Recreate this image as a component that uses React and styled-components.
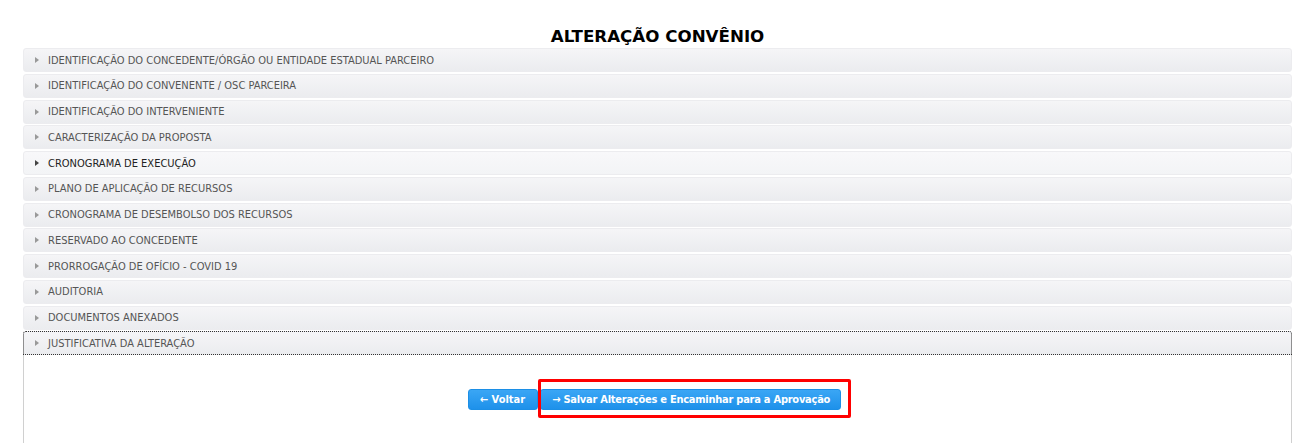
import React from 'react';
import styled, { createGlobalStyle } from 'styled-components';

const GlobalStyle = createGlobalStyle`
  html, body {
    margin: 0;
    padding: 0;
    background: #fff;
  }
  body {
    font-family: "DejaVu Sans Condensed", "DejaVu Sans", sans-serif;
  }
`;

const Page = styled.div`
  padding: 26px 16px 0 23px;
  width: 1269px;
`;

const Title = styled.h1`
  margin: 0 0 2px;
  text-align: center;
  font-family: "DejaVu Sans", sans-serif;
  font-size: 16.7px;
  font-weight: bold;
  line-height: 20px;
  color: #000;
`;

const Accordion = styled.div`
  display: flex;
  flex-direction: column;
  gap: 1.75px;
`;

const Header = styled.div`
  display: flex;
  align-items: center;
  height: 24px;
  box-sizing: border-box;
  padding-left: 11px;
  border-radius: 3px;
  border: 1px solid #ececef;
  background: linear-gradient(#f5f5f7, #ebecef);
  font-size: 11px;
  color: ${p => (p.$hover ? '#222' : '#555')};
  outline: ${p => (p.$focus ? '1px dotted #333' : 'none')};
  outline-offset: -1px;
  border-bottom-left-radius: ${p => (p.$open ? 0 : '3px')};
  border-bottom-right-radius: ${p => (p.$open ? 0 : '3px')};
  ${p => p.$hover && 'background: linear-gradient(#f8f8fa, #f3f4f6);'}
`;

const Arrow = styled.span`
  width: 0;
  height: 0;
  margin-right: 9px;
  border-top: 3px solid transparent;
  border-bottom: 3px solid transparent;
  border-left: 4px solid ${p => (p.$dark ? '#444' : '#999')};
`;

const Panel = styled.div`
  height: 90px;
  border-left: 1px solid #d0d0d0;
  border-right: 1px solid #d0d0d0;
  display: flex;
  justify-content: center;
  align-items: flex-start;
  padding: 34px 6px 0 0;
  box-sizing: border-box;
  margin-top: -1.75px;
  gap: 2px;
`;

const Button = styled.button`
  position: relative;
  height: 21px;
  padding: 0 ${p => (p.$wide ? '10px' : '12px')} 0 11px;
  border: 1px solid #1c8fe6;
  border-radius: 3px;
  background: linear-gradient(#3aa6f5, #1e91ea);
  color: #fff;
  font-family: "DejaVu Sans Condensed", "DejaVu Sans", sans-serif;
  font-size: 11px;
  font-weight: bold;
  letter-spacing: ${p => (p.$wide ? '-0.25px' : '0')};
  display: flex;
  align-items: center;
  gap: ${p => (p.$wide ? '5px' : '7px')};
  cursor: pointer;
`;

const Mark = styled.span`
  position: absolute;
  left: -3px;
  top: -11px;
  right: -11px;
  bottom: -9px;
  border: 3px solid #f00;
  border-radius: 2px;
  pointer-events: none;
`;

const sections = [
  'IDENTIFICAÇÃO DO CONCEDENTE/ÓRGÃO OU ENTIDADE ESTADUAL PARCEIRO',
  'IDENTIFICAÇÃO DO CONVENENTE / OSC PARCEIRA',
  'IDENTIFICAÇÃO DO INTERVENIENTE',
  'CARACTERIZAÇÃO DA PROPOSTA',
  'CRONOGRAMA DE EXECUÇÃO',
  'PLANO DE APLICAÇÃO DE RECURSOS',
  'CRONOGRAMA DE DESEMBOLSO DOS RECURSOS',
  'RESERVADO AO CONCEDENTE',
  'PRORROGAÇÃO DE OFÍCIO - COVID 19',
  'AUDITORIA',
  'DOCUMENTOS ANEXADOS',
  'JUSTIFICATIVA DA ALTERAÇÃO',
];

export default function App() {
  const last = sections.length - 1;
  return (
    <Page>
      <GlobalStyle />
      <Title>ALTERAÇÃO CONVÊNIO</Title>
      <Accordion>
        {sections.map((s, i) => (
          <Header key={s} $hover={i === 4} $focus={i === last} $open={i === last}>
            <Arrow $dark={i === 4} />
            {s}
          </Header>
        ))}
        <Panel>
          <Button>← Voltar</Button>
          <Button $wide>
            → Salvar Alterações e Encaminhar para a Aprovação
            <Mark />
          </Button>
        </Panel>
      </Accordion>
    </Page>
  );
}
